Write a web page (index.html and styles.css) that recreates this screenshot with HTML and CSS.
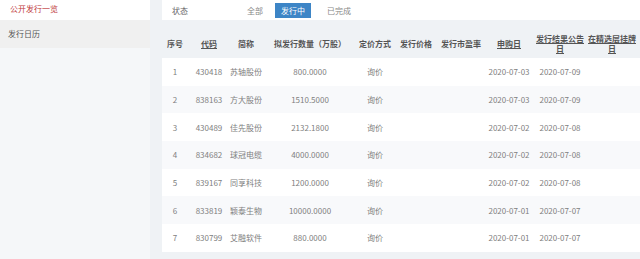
FILE: index.html
```html
<!DOCTYPE html>
<html lang="zh-CN">
<head>
    <meta charset="UTF-8">
    <title>公开发行一览</title>
    <link rel="stylesheet" href="styles.css">
</head>
<body>
<div class="page">
    <div class="sidebar">
        <div class="nav-item active">公开发行一览</div>
        <div class="nav-item">发行日历</div>
    </div>

    <div class="main">
        <div class="filter-bar">
            <span class="filter-label">状态</span>
            <span class="filter-opt">全部</span>
            <span class="filter-opt selected">发行中</span>
            <span class="filter-opt">已完成</span>
        </div>

        <table class="list">
            <colgroup>
                <col style="width: 26px">
                <col style="width: 42px">
                <col style="width: 32px">
                <col style="width: 96px">
                <col style="width: 34px">
                <col style="width: 48px">
                <col style="width: 42px">
                <col style="width: 54px">
                <col style="width: 48px">
                <col style="width: 56px">
            </colgroup>
            <thead>
                <tr>
                    <th>序号</th>
                    <th><span class="sort">代码</span></th>
                    <th>简称</th>
                    <th>拟发行数量（万股）</th>
                    <th>定价方式</th>
                    <th>发行价格</th>
                    <th>发行市盈率</th>
                    <th><span class="sort">申购日</span></th>
                    <th><span class="sort">发行结果公告<br>日</span></th>
                    <th><span class="sort">在精选层挂牌<br>日</span></th>
                </tr>
            </thead>
            <tbody>
                <tr><td>1</td><td class="code">430418</td><td>苏轴股份</td><td>800.0000</td><td>询价</td><td></td><td></td><td>2020-07-03</td><td>2020-07-09</td><td></td></tr>
                <tr><td>2</td><td class="code">838163</td><td>方大股份</td><td>1510.5000</td><td>询价</td><td></td><td></td><td>2020-07-03</td><td>2020-07-09</td><td></td></tr>
                <tr><td>3</td><td class="code">430489</td><td>佳先股份</td><td>2132.1800</td><td>询价</td><td></td><td></td><td>2020-07-02</td><td>2020-07-08</td><td></td></tr>
                <tr><td>4</td><td class="code">834682</td><td>球冠电缆</td><td>4000.0000</td><td>询价</td><td></td><td></td><td>2020-07-02</td><td>2020-07-08</td><td></td></tr>
                <tr><td>5</td><td class="code">839167</td><td>同享科技</td><td>1200.0000</td><td>询价</td><td></td><td></td><td>2020-07-02</td><td>2020-07-08</td><td></td></tr>
                <tr><td>6</td><td class="code">833819</td><td>颖泰生物</td><td>10000.0000</td><td>询价</td><td></td><td></td><td>2020-07-01</td><td>2020-07-07</td><td></td></tr>
                <tr><td>7</td><td class="code">830799</td><td>艾融软件</td><td>880.0000</td><td>询价</td><td></td><td></td><td>2020-07-01</td><td>2020-07-07</td><td></td></tr>
            </tbody>
        </table>
    </div>
</div>
</body>
</html>
```

FILE: styles.css
```css
body {
    margin: 0;
    padding: 0;
    font-family: "Noto Sans CJK SC", "Noto Sans", sans-serif;
    font-size: 8px;
    color: #666;
    background-color: #eff2f5;
}
.page {
    display: flex;
    height: 259px;
    overflow: hidden;
}
.sidebar {
    width: 150px;
    flex-shrink: 0;
    background: #f5f7f9;
}
.nav-item {
    height: 28px;
    line-height: 28px;
    padding-left: 8px;
    color: #555;
    background: #f0f0f0;
}
.nav-item.active {
    height: 20px;
    line-height: 18px;
    padding-left: 10px;
    color: #c0393b;
    background: white;
}
.main {
    flex: 1;
    padding-left: 12px;
}
.filter-bar {
    height: 20px;
    display: flex;
    align-items: center;
    background: white;
    margin-bottom: 10px;
}
.filter-label {
    margin-left: 10px;
    width: 69px;
    color: #666;
}
.filter-opt {
    padding: 0 6px;
    margin-right: 4px;
    color: #888;
    line-height: 15px;
}
.filter-opt.selected {
    background: #3d85c6;
    color: white;
    margin-left: 2px;
    margin-right: 10px;
}
.list {
    width: 478px;
    table-layout: fixed;
    border-collapse: collapse;
}
.list th {
    height: 28px;
    padding: 0;
    font-weight: bold;
    color: #555;
    line-height: 10px;
    white-space: nowrap;
    text-align: center;
}
.list td {
    height: 27.7px;
    padding: 0;
    text-align: center;
    white-space: nowrap;
    color: #808080;
}
.list tbody tr {
    background: white;
}
.list tbody tr:nth-child(even) {
    background: #f8f9fb;
}
.sort {
    text-decoration: underline;
}
.code {
    color: #4a7fb5;
}
```
